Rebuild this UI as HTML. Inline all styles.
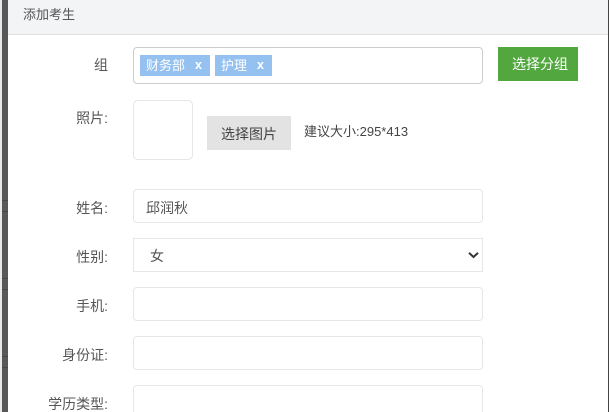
<!DOCTYPE html>
<html lang="zh">
<head>
<meta charset="utf-8">
<style>
html,body{margin:0;padding:0;width:609px;height:412px;overflow:hidden;background:#fff;}
body{position:relative;font-family:"Liberation Sans","Noto Sans CJK SC",sans-serif;font-size:13px;color:#555;}
div,span{position:absolute;box-sizing:border-box;white-space:nowrap;}
.lbl{right:501px;text-align:right;height:20px;line-height:20px;color:#555;font-size:14px;}
.inp{left:133px;width:350px;height:34px;border:1px solid #e5e6e7;border-radius:4px;background:#fff;}
.tag{top:55px;height:21px;background:#95c1f0;color:#fff;line-height:21px;font-size:13px;}
</style>
</head>
<body>
<div style="left:0;top:0;width:2px;height:412px;background:#e8e8e8"></div>
<div style="left:2px;top:0;width:6px;height:412px;background:#585858"></div>
<div style="left:2px;top:200px;width:6px;height:1px;background:#484848"></div>
<div style="left:2px;top:211px;width:6px;height:1px;background:#484848"></div>
<div style="left:2px;top:278px;width:6px;height:1px;background:#484848"></div>
<div style="left:2px;top:289px;width:6px;height:1px;background:#484848"></div>
<div style="left:2px;top:356px;width:6px;height:1px;background:#484848"></div>
<div style="left:2px;top:367px;width:6px;height:1px;background:#484848"></div>
<div style="left:608px;top:0;width:1px;height:412px;background:#444"></div>

<div style="left:8px;top:0;width:600px;height:35px;background:#f3f4f6;border-bottom:1px solid #e0e0e0"></div>
<div style="left:23px;top:5px;height:20px;line-height:20px;font-size:13px;color:#555">添加考生</div>

<div class="lbl" style="top:55px">组</div>
<div style="left:133px;top:47px;width:350px;height:37px;border:1px solid #ccc;border-radius:4px;background:#fff"></div>
<div class="tag" style="left:140px;width:70px;padding-left:6px">财务部<span style="left:55px;top:0;font-weight:bold;font-size:12.500px;">x</span></div>
<div class="tag" style="left:215px;width:57px;padding-left:6px">护理<span style="left:42px;top:0;font-weight:bold;font-size:12.500px;">x</span></div>
<div style="left:498px;top:47px;width:80px;height:34px;background:#52a73f;color:#fff;line-height:35px;font-size:14px;padding-left:14px">选择分组</div>

<div class="lbl" style="top:108px">照片:</div>
<div style="left:133px;top:100px;width:60px;height:60px;border:1px solid #e5e6e7;border-radius:5px;background:#fff"></div>
<div style="left:207px;top:116px;width:84px;height:34px;background:#e3e3e3;color:#444;line-height:36px;font-size:14px;padding-left:14px">选择图片</div>
<div style="left:304px;top:122px;height:20px;line-height:20px;font-size:13px;color:#444">建议大小:295*413</div>

<div class="lbl" style="top:198px">姓名:</div>
<div class="inp" style="top:189px"></div>
<div style="left:146px;top:198px;height:20px;line-height:20px;font-size:14px;color:#555">邱润秋</div>

<div class="lbl" style="top:247px">性别:</div>
<div class="inp" style="top:238px;border-radius:0"></div>
<div style="left:150px;top:246px;height:20px;line-height:20px;font-size:14px;color:#555">女</div>
<svg style="position:absolute;left:468px;top:251px" width="12" height="9" viewBox="0 0 12 9"><path d="M1 1.800 L5.500 6 L10 1.800" fill="none" stroke="#333" stroke-width="2"/></svg>

<div class="lbl" style="top:296px">手机:</div>
<div class="inp" style="top:287px"></div>

<div class="lbl" style="top:345px">身份证:</div>
<div class="inp" style="top:336px"></div>

<div class="lbl" style="top:394px">学历类型:</div>
<div class="inp" style="top:385px"></div>
</body>
</html>
